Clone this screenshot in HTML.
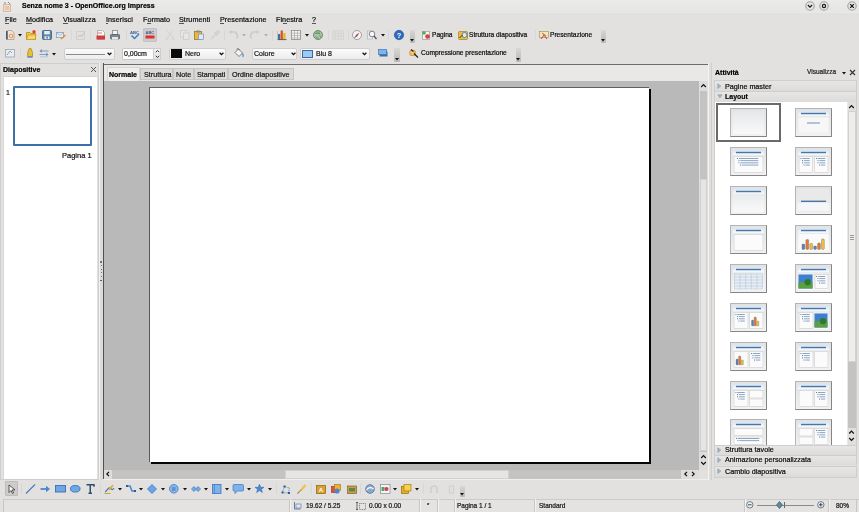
<!DOCTYPE html>
<html><head><meta charset="utf-8"><style>
*{margin:0;padding:0;box-sizing:border-box}
html,body{width:859px;height:512px;overflow:hidden}
body{background:#e2e1e0;font-family:"Liberation Sans",sans-serif;position:relative}
.a{position:absolute}
.t{position:absolute;white-space:nowrap;line-height:10px;will-change:transform;-webkit-text-stroke:0.2px currentColor}
svg.a{overflow:visible}
</style></head><body>
<div class="a" style="left:0px;top:0px;width:859px;height:13px;background:linear-gradient(#ebebeb,#e5e5e4)"></div>
<div class="a" style="left:0px;top:11.5px;width:859px;height:1px;background:#e9e9e8"></div>
<svg class="a" style="left:2px;top:1px" width="10" height="11" viewBox="0 0 10 11"><rect x="1.5" y="3.5" width="7" height="7" fill="#f3dcc6" stroke="#d9b9a0"/><path d="M2 2h2M6 1l2 2" stroke="#888" stroke-width="1"/><path d="M3 6h4M3 8h4" stroke="#c99" stroke-width="0.7"/></svg>
<div class="t" style="left:22px;top:0.57px;font-size:7px;font-weight:bold;color:#000;">Senza nome 3 - OpenOffice.org Impress</div>
<svg class="a" style="left:805.3px;top:1.2px" width="10" height="10" viewBox="0 0 10 10"><circle cx="5" cy="5" r="4.2" fill="#e6e6e6" stroke="#a0a0a0" stroke-width="1.1"/><path d="M2.9 4l2.1 2.1l2.1-2.1" fill="none" stroke="#1a1a1a" stroke-width="1.2"/></svg>
<svg class="a" style="left:819px;top:1.2px" width="10" height="10" viewBox="0 0 10 10"><circle cx="5" cy="5" r="4.2" fill="#e6e6e6" stroke="#a0a0a0" stroke-width="1.1"/><circle cx="5" cy="5" r="1.6" fill="none" stroke="#1a1a1a" stroke-width="1.2"/></svg>
<svg class="a" style="left:847.2px;top:1.2px" width="10" height="10" viewBox="0 0 10 10"><circle cx="5" cy="5" r="4.2" fill="#e6e6e6" stroke="#a0a0a0" stroke-width="1.1"/><path d="M3.2 3.2l3.6 3.6M6.8 3.2l-3.6 3.6" stroke="#111" stroke-width="1.2"/></svg>
<div class="t" style="left:5px;top:14.51px;font-size:7.2px;font-weight:normal;color:#0a0a0a;letter-spacing:0.05px">File</div>
<div class="t" style="left:26px;top:14.51px;font-size:7.2px;font-weight:normal;color:#0a0a0a;letter-spacing:0.05px">Modifica</div>
<div class="t" style="left:63px;top:14.51px;font-size:7.2px;font-weight:normal;color:#0a0a0a;letter-spacing:0.05px">Visualizza</div>
<div class="t" style="left:106px;top:14.51px;font-size:7.2px;font-weight:normal;color:#0a0a0a;letter-spacing:0.05px">Inserisci</div>
<div class="t" style="left:142.5px;top:14.51px;font-size:7.2px;font-weight:normal;color:#0a0a0a;letter-spacing:0.05px">Formato</div>
<div class="t" style="left:179px;top:14.51px;font-size:7.2px;font-weight:normal;color:#0a0a0a;letter-spacing:0.05px">Strumenti</div>
<div class="t" style="left:219.5px;top:14.51px;font-size:7.2px;font-weight:normal;color:#0a0a0a;letter-spacing:0.05px">Presentazione</div>
<div class="t" style="left:276px;top:14.51px;font-size:7.2px;font-weight:normal;color:#0a0a0a;letter-spacing:0.05px">Finestra</div>
<div class="t" style="left:312px;top:14.51px;font-size:7.2px;font-weight:normal;color:#0a0a0a;letter-spacing:0.05px">?</div>
<div class="a" style="left:5px;top:23px;width:4px;height:1px;background:#555"></div>
<div class="a" style="left:26px;top:23px;width:6px;height:1px;background:#555"></div>
<div class="a" style="left:63px;top:23px;width:5px;height:1px;background:#555"></div>
<div class="a" style="left:106px;top:23px;width:2px;height:1px;background:#555"></div>
<div class="a" style="left:147px;top:23px;width:4px;height:1px;background:#555"></div>
<div class="a" style="left:179px;top:23px;width:5px;height:1px;background:#555"></div>
<div class="a" style="left:219.5px;top:23px;width:4px;height:1px;background:#555"></div>
<div class="a" style="left:283px;top:23px;width:4px;height:1px;background:#555"></div>
<div class="a" style="left:312px;top:23px;width:4px;height:1px;background:#555"></div>
<svg class="a" style="left:4.5px;top:29.8px" width="10" height="10" viewBox="0 0 10 10"><path d="M2.5 0.5h4l2.5 2.5v6.5h-6.5z" fill="#f6e3cf" stroke="#b59a80" stroke-width="0.8"/><rect x="1" y="1" width="1.6" height="8.5" fill="#3d5f80"/><circle cx="6" cy="6" r="1.8" fill="none" stroke="#d88a4a" stroke-width="0.9"/></svg>
<svg class="a" style="left:17.8px;top:34px" width="4" height="3" viewBox="0 0 4 3"><path d="M0 0h4l-2 2.5z" fill="#111"/></svg>
<svg class="a" style="left:26px;top:29.8px" width="10" height="10" viewBox="0 0 10 10"><path d="M0.5 2.5h3.5l1 1h4.5v6h-9z" fill="#f2c44a" stroke="#b88a1a" stroke-width="0.8"/><path d="M0.5 9.5l1.5-4.5h8l-1 4.5z" fill="#f7d86a" stroke="#c09020" stroke-width="0.6"/><circle cx="8" cy="1.8" r="1.7" fill="#e0452a"/></svg>
<svg class="a" style="left:41.5px;top:29.8px" width="10" height="10" viewBox="0 0 10 10"><rect x="0.5" y="0.5" width="9" height="9" rx="1" fill="#5a84a3" stroke="#3c5d78" stroke-width="0.8"/><rect x="2.2" y="1" width="5.6" height="3.4" fill="#e4ecf2"/><rect x="2.5" y="6.2" width="5" height="3" fill="#e0e6ea"/><rect x="4.5" y="6.6" width="1.2" height="2" fill="#3c5d78"/></svg>
<svg class="a" style="left:56px;top:29.8px" width="10" height="10" viewBox="0 0 10 10"><rect x="0.5" y="2.5" width="7" height="5" fill="#e6eef6" stroke="#8aa0b8" stroke-width="0.8"/><path d="M0.5 2.5l3.5 3l3.5-3" fill="none" stroke="#8aa0b8" stroke-width="0.7"/><path d="M5 9l4.5-4" stroke="#e09040" stroke-width="1.6"/></svg>
<div class="a" style="left:71px;top:30px;width:1px;height:11px;background:#d8d7d6"></div>
<svg class="a" style="left:75.5px;top:29.8px" width="10" height="10" viewBox="0 0 10 10"><rect x="0.5" y="1.5" width="8" height="8" fill="none" stroke="#cfcfcf" stroke-width="0.9"/><path d="M2 7l2-2 1.5 1.5 3.5-5" fill="none" stroke="#c8c8c8" stroke-width="1.2"/></svg>
<div class="a" style="left:90px;top:30px;width:1px;height:11px;background:#d8d7d6"></div>
<svg class="a" style="left:96px;top:29.8px" width="10" height="10" viewBox="0 0 10 10"><path d="M1.5 0.5h5l2 2v7h-7z" fill="#fafafa" stroke="#b0a0a0" stroke-width="0.8"/><rect x="0.5" y="5.5" width="8.5" height="4" fill="#d23b3b"/><path d="M2 3h4" stroke="#d55" stroke-width="0.8"/></svg>
<svg class="a" style="left:110px;top:29.8px" width="10" height="10" viewBox="0 0 10 10"><rect x="2.5" y="0.5" width="5" height="4" fill="#f4f4f4" stroke="#8a8a8a" stroke-width="0.8"/><rect x="0.5" y="4.5" width="9" height="4.5" rx="0.8" fill="#7d8790" stroke="#55606a" stroke-width="0.8"/><rect x="2" y="7" width="6" height="2.5" fill="#e8e8e8"/></svg>
<div class="a" style="left:125.5px;top:30px;width:1px;height:11px;background:#d8d7d6"></div>
<svg class="a" style="left:130px;top:29.8px" width="10" height="10" viewBox="0 0 10 10"><text x="0" y="4.2" font-size="4.2" font-family="Liberation Sans" font-weight="bold" fill="#3a5f90">ABC</text><path d="M1.5 5.5l3 3l4.5-4.5" fill="none" stroke="#3b7fc7" stroke-width="1.5"/></svg>
<div class="a" style="left:143px;top:28px;width:13.5px;height:14px;background:#cdcccb;border:1px solid #c3c2c1;border-radius:1px"></div>
<svg class="a" style="left:144.5px;top:29.8px" width="10" height="10" viewBox="0 0 10 10"><text x="0.5" y="4.2" font-size="4" font-family="Liberation Sans" font-weight="bold" fill="#3a5f90">ABC</text><rect x="0.5" y="5.5" width="9" height="3" fill="#e03030"/></svg>
<svg class="a" style="left:165px;top:29.8px" width="10" height="10" viewBox="0 0 10 10"><path d="M2 1l6 7M8 1l-6 7" stroke="#d4d4d4" stroke-width="1.1"/><circle cx="2" cy="8.5" r="1.3" fill="none" stroke="#d4d4d4"/><circle cx="8" cy="8.5" r="1.3" fill="none" stroke="#d4d4d4"/></svg>
<svg class="a" style="left:180px;top:29.8px" width="10" height="10" viewBox="0 0 10 10"><rect x="0.5" y="0.5" width="5.5" height="6.5" fill="#e8e8e8" stroke="#d0d0d0"/><rect x="3.5" y="3" width="5.5" height="6.5" fill="#e6e6e6" stroke="#cfcfcf"/></svg>
<svg class="a" style="left:193.5px;top:29.8px" width="10" height="10" viewBox="0 0 10 10"><rect x="0.5" y="1.5" width="7" height="8" fill="#e7b845" stroke="#a07b20" stroke-width="0.8"/><rect x="2.5" y="0.5" width="3" height="2" fill="#888"/><rect x="4.5" y="4" width="5" height="5.5" fill="#dfe8f5" stroke="#7a90b0" stroke-width="0.7"/></svg>
<svg class="a" style="left:209.5px;top:29.8px" width="10" height="10" viewBox="0 0 10 10"><path d="M1 9l5-5M5 3l3-2 1 1-2 3z" stroke="#d0d0d0" stroke-width="1.4" fill="#ddd"/></svg>
<div class="a" style="left:223.5px;top:30px;width:1px;height:11px;background:#d8d7d6"></div>
<svg class="a" style="left:227.5px;top:29.8px" width="10" height="10" viewBox="0 0 10 10"><path d="M8.5 8.5a4 4 0 0 0-4-6.5h-3" fill="none" stroke="#cbcbcb" stroke-width="1.6"/><path d="M0.5 2l3-2v4z" fill="#cbcbcb"/></svg>
<svg class="a" style="left:242px;top:34px" width="4" height="3" viewBox="0 0 4 3"><path d="M0 0h4l-2 2.5z" fill="#b0b0b0"/></svg>
<svg class="a" style="left:250px;top:29.8px" width="10" height="10" viewBox="0 0 10 10"><path d="M1.5 8.5a4 4 0 0 1 4-6.5h3" fill="none" stroke="#cbcbcb" stroke-width="1.6"/><path d="M9.5 2l-3-2v4z" fill="#cbcbcb"/></svg>
<svg class="a" style="left:264px;top:34px" width="4" height="3" viewBox="0 0 4 3"><path d="M0 0h4l-2 2.5z" fill="#b0b0b0"/></svg>
<div class="a" style="left:271.5px;top:30px;width:1px;height:11px;background:#d8d7d6"></div>
<svg class="a" style="left:276.5px;top:29.8px" width="10" height="10" viewBox="0 0 10 10"><rect x="1" y="4" width="2.3" height="5.5" fill="#3f6fb0"/><rect x="3.6" y="0.5" width="2.3" height="9" fill="#d45a1e"/><rect x="6.2" y="3" width="2.3" height="6.5" fill="#f0b428"/><path d="M0.5 9.6h9" stroke="#444" stroke-width="0.8"/><path d="M0.5 1v9" stroke="#9aa" stroke-width="0.5"/></svg>
<svg class="a" style="left:291px;top:29.8px" width="10" height="10" viewBox="0 0 10 10"><rect x="0.5" y="0.5" width="9" height="9" fill="#f6f6f6" stroke="#8c8c8c" stroke-width="0.8"/><path d="M0.5 3.2h9M0.5 5.6h9M0.5 8h9M3.5 0.5v9M6.5 0.5v9" stroke="#9a9a9a" stroke-width="0.6"/></svg>
<svg class="a" style="left:304.5px;top:34px" width="4" height="3" viewBox="0 0 4 3"><path d="M0 0h4l-2 2.5z" fill="#111"/></svg>
<svg class="a" style="left:312.5px;top:29.8px" width="10" height="10" viewBox="0 0 10 10"><circle cx="5" cy="5" r="4.5" fill="#a6c89a" stroke="#66806a" stroke-width="0.9"/><path d="M2 3.5c1.5-1 2.5 0.5 4-0.5l1 1.5M2.5 6.5c1 1.5 2.5 1 3 2.5M6.5 6l1.5 1" stroke="#6a7f8a" stroke-width="1" fill="none"/><path d="M3 2h4" stroke="#5fae4a" stroke-width="1"/></svg>
<div class="a" style="left:327.5px;top:30px;width:1px;height:11px;background:#d8d7d6"></div>
<svg class="a" style="left:332px;top:29.8px" width="12" height="10" viewBox="0 0 12 10"><path d="M0.5 1h11M0.5 3.7h11M0.5 6.4h11M0.5 9.1h11M1 0.5v9.5M3.7 0.5v9.5M6.4 0.5v9.5M9.1 0.5v9.5M11.5 0.5v9.5" stroke="#c2c2c2" stroke-width="0.6" stroke-dasharray="0.9 0.6"/></svg>
<div class="a" style="left:348px;top:30px;width:1px;height:11px;background:#d8d7d6"></div>
<svg class="a" style="left:352px;top:29.8px" width="10" height="10" viewBox="0 0 10 10"><circle cx="5" cy="5" r="4.5" fill="#f4f4f4" stroke="#9a9a9a" stroke-width="0.9"/><path d="M7.5 2.5L5.5 5.5L2.5 7.5L4.5 4.5z" fill="#d33"/><path d="M2.5 7.5l3-2" stroke="#3a5f90" stroke-width="1"/></svg>
<svg class="a" style="left:366.5px;top:29.8px" width="10" height="10" viewBox="0 0 10 10"><rect x="0.5" y="1" width="5" height="8" fill="#e8eef6" stroke="#a0b0c4" stroke-width="0.6"/><circle cx="5" cy="4" r="2.8" fill="#f8f8f8" stroke="#777" stroke-width="0.9"/><path d="M7 6l2.5 3" stroke="#555" stroke-width="1.3"/></svg>
<svg class="a" style="left:380.5px;top:34px" width="4" height="3" viewBox="0 0 4 3"><path d="M0 0h4l-2 2.5z" fill="#111"/></svg>
<div class="a" style="left:388px;top:30px;width:1px;height:11px;background:#d8d7d6"></div>
<svg class="a" style="left:393.5px;top:29.8px" width="10" height="10" viewBox="0 0 10 10"><circle cx="5" cy="5" r="4.7" fill="#2f6ac0" stroke="#1d4f9a" stroke-width="0.6"/><text x="5" y="7.9" font-size="7.5" text-anchor="middle" font-family="Liberation Sans" font-weight="bold" fill="#fff">?</text></svg>
<div class="a" style="left:409.5px;top:30px;width:5.5px;height:13px;background:linear-gradient(#d8d7d6,#b9b8b7);border-radius:1px"></div>
<svg class="a" style="left:410.0px;top:39px" width="4" height="3" viewBox="0 0 4 3"><path d="M0 0h4l-2 2.5z" fill="#111"/></svg>
<svg class="a" style="left:420.5px;top:29.8px" width="10" height="10" viewBox="0 0 10 10"><rect x="1.5" y="1.5" width="7" height="8" fill="#f4f4f4" stroke="#999" stroke-width="0.7"/><circle cx="3" cy="3" r="1.8" fill="#4caf50"/><circle cx="6.5" cy="6.5" r="2.3" fill="#d64040"/></svg>
<div class="t" style="left:432px;top:29.91px;font-size:6.6px;font-weight:normal;color:#0a0a0a;">Pagina</div>
<svg class="a" style="left:457.5px;top:29.8px" width="10" height="10" viewBox="0 0 10 10"><rect x="0.5" y="1.5" width="9" height="8" rx="1" fill="#e8c040" stroke="#a08020" stroke-width="0.7"/><circle cx="6.5" cy="5" r="2.5" fill="#dfe8f5" stroke="#4a6fa0" stroke-width="0.8"/><path d="M1.5 8l3-3" stroke="#333" stroke-width="1"/></svg>
<div class="t" style="left:469px;top:29.91px;font-size:6.6px;font-weight:normal;color:#0a0a0a;">Struttura diapositiva</div>
<div class="a" style="left:534.5px;top:30px;width:1px;height:11px;background:#d8d7d6"></div>
<svg class="a" style="left:538.5px;top:29.8px" width="10" height="10" viewBox="0 0 10 10"><rect x="0.5" y="1.5" width="9" height="6" fill="#f3e6c8" stroke="#b09060" stroke-width="0.7"/><path d="M2 9l3-4l3 4" stroke="#c04040" stroke-width="1" fill="none"/><path d="M3 3l4 3" stroke="#d08030" stroke-width="1.2"/></svg>
<div class="t" style="left:550px;top:29.91px;font-size:6.6px;font-weight:normal;color:#0a0a0a;">Presentazione</div>
<div class="a" style="left:600.5px;top:30px;width:5.5px;height:13px;background:linear-gradient(#d8d7d6,#b9b8b7);border-radius:1px"></div>
<svg class="a" style="left:601.0px;top:39px" width="4" height="3" viewBox="0 0 4 3"><path d="M0 0h4l-2 2.5z" fill="#111"/></svg>
<svg class="a" style="left:4.5px;top:48px" width="10" height="10" viewBox="0 0 10 10"><rect x="0.5" y="1.5" width="9" height="7.5" fill="#e9edf2" stroke="#9aa4b0" stroke-width="0.8"/><path d="M2 7l3-4l2 2" fill="none" stroke="#8a96a4" stroke-width="0.9"/></svg>
<div class="a" style="left:19.8px;top:48px;width:1px;height:11px;background:#d8d7d6"></div>
<svg class="a" style="left:26px;top:48px" width="8" height="10" viewBox="0 0 8 10"><path d="M3.2 0.5l1.8 0l1.5 4v4h-4.8v-4z" fill="#e8c030" stroke="#a48214" stroke-width="0.7"/><rect x="1.5" y="8" width="5" height="1.8" fill="#6d8fc0"/></svg>
<svg class="a" style="left:39px;top:48px" width="10" height="10" viewBox="0 0 10 10"><path d="M2 3h7.5M0.5 6.5h7.5" stroke="#7d9bc4" stroke-width="1.1"/><path d="M0.5 3l2.2-2v4zM9.5 6.5l-2.2-2v4z" fill="#6f90bd"/><path d="M1 8.8h8" stroke="#a9bdd8" stroke-width="0.8"/></svg>
<svg class="a" style="left:52.4px;top:52.5px" width="4" height="3" viewBox="0 0 4 3"><path d="M0 0h4l-2 2.5z" fill="#111"/></svg>
<div class="a" style="left:63.5px;top:47.5px;width:51px;height:12px;background:linear-gradient(#fbfbfb,#ececec);border:1px solid #cfcece;border-radius:2px"></div>
<div class="a" style="left:65.5px;top:53.5px;width:39px;height:1.2px;background:#8a8a8a"></div>
<svg class="a" style="left:107.2px;top:52px" width="5" height="4" viewBox="0 0 5 4"><path d="M0.6 0.8l1.9 1.9l1.9-1.9" fill="none" stroke="#111" stroke-width="1.3"/></svg>
<div class="a" style="left:121.5px;top:47.5px;width:32px;height:12px;background:#fcfcfc;border:1px solid #c9c8c7;border-radius:1px"></div>
<div class="t" style="left:123.5px;top:49.07px;font-size:7px;font-weight:normal;color:#111;">0,00cm</div>
<div class="a" style="left:153px;top:47.5px;width:8px;height:12px;background:linear-gradient(#f2f2f2,#e0e0e0);border:1px solid #cfcece"></div>
<svg class="a" style="left:154.5px;top:48.5px" width="5" height="10" viewBox="0 0 5 10"><path d="M0.8 3.2l1.7-1.7l1.7 1.7M0.8 6.8l1.7 1.7l1.7-1.7" fill="none" stroke="#222" stroke-width="0.9"/></svg>
<div class="a" style="left:168.5px;top:47.5px;width:57px;height:12px;background:linear-gradient(#fbfbfb,#ececec);border:1px solid #cfcece;border-radius:2px"></div>
<div class="a" style="left:171px;top:49.3px;width:10.5px;height:8.3px;background:#0a0a0a"></div>
<div class="t" style="left:184.5px;top:49.07px;font-size:7px;font-weight:normal;color:#111;">Nero</div>
<svg class="a" style="left:218.5px;top:52px" width="5" height="4" viewBox="0 0 5 4"><path d="M0.6 0.8l1.9 1.9l1.9-1.9" fill="none" stroke="#111" stroke-width="1.3"/></svg>
<svg class="a" style="left:234px;top:48px" width="10" height="10" viewBox="0 0 10 10"><path d="M1 4.5l3.5-3.5 4 4-3.5 3.5z" fill="#f4f4f4" stroke="#6a6f78" stroke-width="0.9"/><path d="M2.5 1.2c1-1 2.5-0.5 3 0.6" stroke="#555" stroke-width="0.7" fill="none"/><path d="M8.5 5.5c0.8 1 1 2.5 0.3 3.5" stroke="#4f8fd0" stroke-width="1.3" fill="none"/></svg>
<div class="a" style="left:251.5px;top:47.5px;width:45.5px;height:12px;background:linear-gradient(#fbfbfb,#ececec);border:1px solid #cfcece;border-radius:2px"></div>
<div class="t" style="left:254px;top:49.07px;font-size:7px;font-weight:normal;color:#111;">Colore</div>
<svg class="a" style="left:290.5px;top:52px" width="5" height="4" viewBox="0 0 5 4"><path d="M0.6 0.8l1.9 1.9l1.9-1.9" fill="none" stroke="#111" stroke-width="1.3"/></svg>
<div class="a" style="left:300px;top:47.5px;width:69.5px;height:12px;background:linear-gradient(#fbfbfb,#ececec);border:1px solid #cfcece;border-radius:2px"></div>
<div class="a" style="left:302px;top:49.5px;width:11px;height:8px;background:#9ccaf6;border:1px solid #3e6a9c"></div>
<div class="t" style="left:316px;top:49.07px;font-size:7px;font-weight:normal;color:#111;">Blu 8</div>
<svg class="a" style="left:362.2px;top:52px" width="5" height="4" viewBox="0 0 5 4"><path d="M0.6 0.8l1.9 1.9l1.9-1.9" fill="none" stroke="#111" stroke-width="1.3"/></svg>
<svg class="a" style="left:377.5px;top:48px" width="10" height="10" viewBox="0 0 10 10"><rect x="1.5" y="3.5" width="8" height="5" fill="#3a6ea8"/><rect x="0.5" y="1.5" width="8" height="5" fill="#7cb6ef" stroke="#3d76b6" stroke-width="0.7"/></svg>
<div class="a" style="left:394px;top:47.5px;width:5.5px;height:14px;background:linear-gradient(#d8d7d6,#b9b8b7);border-radius:1px"></div>
<svg class="a" style="left:394.5px;top:57.5px" width="4" height="3" viewBox="0 0 4 3"><path d="M0 0h4l-2 2.5z" fill="#111"/></svg>
<svg class="a" style="left:409px;top:48px" width="10" height="10" viewBox="0 0 10 10"><rect x="0.8" y="2.5" width="5.5" height="5" rx="1.2" fill="#f3c56a" stroke="#d08a30" stroke-width="0.8"/><path d="M2 1.5l2.5 2M5 5.5l4 4" stroke="#222" stroke-width="1.2"/></svg>
<div class="t" style="left:420.5px;top:48.21px;font-size:6.6px;font-weight:normal;color:#0a0a0a;">Compressione presentazione</div>
<div class="a" style="left:515.5px;top:47.5px;width:5.5px;height:14px;background:linear-gradient(#d8d7d6,#b9b8b7);border-radius:1px"></div>
<svg class="a" style="left:516.0px;top:57.5px" width="4" height="3" viewBox="0 0 4 3"><path d="M0 0h4l-2 2.5z" fill="#111"/></svg>
<div class="a" style="left:0px;top:63px;width:99px;height:417px;background:#e2e1e0;border:1px solid #cfcecd"></div>
<div class="a" style="left:2.5px;top:76px;width:94px;height:403px;background:#fff;border-top:1px solid #d4d3d2;border-left:1px solid #d8d7d6"></div>
<div class="t" style="left:3px;top:65.07px;font-size:7px;font-weight:bold;color:#000;">Diapositive</div>
<svg class="a" style="left:89.5px;top:65.6px" width="7" height="7" viewBox="0 0 7 7"><path d="M1 1l5 5M6 1l-5 5" stroke="#555" stroke-width="1"/></svg>
<div class="t" style="left:5.5px;top:88.07px;font-size:7px;font-weight:normal;color:#1a1a1a;">1</div>
<div class="a" style="left:13px;top:86px;width:78.5px;height:59.5px;border:2px solid #3d6fa8;background:#fff;border-radius:1px"></div>
<div class="t" style="left:61.5px;top:150.90px;font-size:7.5px;font-weight:normal;color:#111;">Pagina 1</div>
<div class="a" style="left:98.5px;top:63px;width:4.5px;height:417px;background:#dddcdb;border-left:1px solid #f2f2f2"></div>
<div class="a" style="left:100.2px;top:261px;width:1.6px;height:1.6px;background:#505050;border-radius:1px"></div>
<div class="a" style="left:100.2px;top:279.5px;width:1.6px;height:1.6px;background:#505050;border-radius:1px"></div>
<div class="a" style="left:100.5px;top:265px;width:1px;height:1px;background:#777"></div>
<div class="a" style="left:100.5px;top:268.5px;width:1px;height:1px;background:#777"></div>
<div class="a" style="left:100.5px;top:272px;width:1px;height:1px;background:#777"></div>
<div class="a" style="left:100.5px;top:275.5px;width:1px;height:1px;background:#777"></div>
<div class="a" style="left:103px;top:63.6px;width:605px;height:1.5px;background:#6c6c6c"></div>
<div class="a" style="left:103px;top:63px;width:1px;height:417px;background:#505050"></div>
<div class="a" style="left:104px;top:64.5px;width:604px;height:16.5px;background:#e9e8e7"></div>
<div class="a" style="left:107px;top:66.5px;width:33px;height:14.5px;background:#efeeed;border:1px solid #d6d5d4;border-bottom:none"></div>
<div class="t" style="left:108.7px;top:69.57px;font-size:7px;font-weight:bold;color:#000;">Normale</div>
<div class="a" style="left:140px;top:67.5px;width:33px;height:12.5px;background:#dad9d8;border:1px solid #c6c5c4"></div>
<div class="t" style="left:143.5px;top:69.71px;font-size:7.2px;font-weight:normal;color:#111;">Struttura</div>
<div class="a" style="left:173px;top:67.5px;width:21px;height:12.5px;background:#dad9d8;border:1px solid #c6c5c4"></div>
<div class="t" style="left:176px;top:69.71px;font-size:7.2px;font-weight:normal;color:#111;">Note</div>
<div class="a" style="left:194px;top:67.5px;width:34px;height:12.5px;background:#dad9d8;border:1px solid #c6c5c4"></div>
<div class="t" style="left:197px;top:69.71px;font-size:7.2px;font-weight:normal;color:#111;">Stampati</div>
<div class="a" style="left:228px;top:67.5px;width:66px;height:12.5px;background:#dad9d8;border:1px solid #c6c5c4"></div>
<div class="t" style="left:231.5px;top:69.71px;font-size:7.2px;font-weight:normal;color:#111;">Ordine diapositive</div>
<div class="a" style="left:104px;top:81px;width:595px;height:388.5px;background:#b9b9b9"></div>
<div class="a" style="left:151px;top:89px;width:500px;height:374.5px;background:#050505"></div>
<div class="a" style="left:149px;top:87px;width:500.3px;height:374.5px;background:#fff;border-left:1px solid #585858;border-top:1px solid #606060"></div>
<div class="a" style="left:699px;top:81px;width:8.5px;height:388.5px;background:#dedddc"></div>
<div class="a" style="left:699.5px;top:91px;width:7.5px;height:88px;background:#c4c3c2"></div>
<div class="a" style="left:699.5px;top:179px;width:7.5px;height:272px;background:#e6e5e4;border:1px solid #d2d1d0"></div>
<div class="a" style="left:699.5px;top:451px;width:7.5px;height:1px;background:#c4c3c2"></div>
<svg class="a" style="left:700px;top:83px" width="7" height="6" viewBox="0 0 7 6"><path d="M1.2 4l2.3-2.3l2.3 2.3" fill="none" stroke="#111" stroke-width="1.2"/></svg>
<svg class="a" style="left:700px;top:454px" width="7" height="12" viewBox="0 0 7 12"><path d="M1.2 4l2.3-2.3l2.3 2.3M1.2 8l2.3 2.3l2.3-2.3" fill="none" stroke="#111" stroke-width="1.2"/></svg>
<div class="a" style="left:104px;top:469.5px;width:595px;height:9.5px;background:#dedddc"></div>
<div class="a" style="left:112px;top:470px;width:172.5px;height:8.5px;background:#c4c3c2"></div>
<div class="a" style="left:284.5px;top:470px;width:224.5px;height:8.5px;background:#e6e5e4;border:1px solid #d2d1d0"></div>
<div class="a" style="left:509px;top:470px;width:172px;height:8.5px;background:#c4c3c2"></div>
<svg class="a" style="left:105px;top:470px" width="6" height="8" viewBox="0 0 6 8"><path d="M4 1.8l-2.2 2.2l2.2 2.2" fill="none" stroke="#111" stroke-width="1.2"/></svg>
<svg class="a" style="left:682px;top:470px" width="16" height="8" viewBox="0 0 16 8"><path d="M5 1.8l-2.2 2.2l2.2 2.2M10 1.8l2.2 2.2l-2.2 2.2" fill="none" stroke="#111" stroke-width="1.2"/></svg>
<div class="a" style="left:699px;top:469.5px;width:9px;height:10px;background:#e2e1e0"></div>
<div class="a" style="left:103px;top:479px;width:605px;height:1px;background:#f0efee"></div>
<div class="a" style="left:708px;top:63px;width:4px;height:417px;background:#dfdedd;border-left:1px solid #f3f3f3;border-right:1px solid #cfcecd"></div>
<div class="a" style="left:712px;top:63px;width:147px;height:417px;background:#e2e1e0"></div>
<div class="t" style="left:715px;top:67.87px;font-size:7px;font-weight:bold;color:#000;">Attività</div>
<div class="t" style="left:807.2px;top:67.25px;font-size:6.5px;font-weight:normal;color:#1a1a1a;">Visualizza</div>
<svg class="a" style="left:842px;top:71.5px" width="4" height="3" viewBox="0 0 4 3"><path d="M0 0h4l-2 2.5z" fill="#111"/></svg>
<svg class="a" style="left:849px;top:68.5px" width="7" height="7" viewBox="0 0 7 7"><path d="M1 1l5 5M6 1l-5 5" stroke="#333" stroke-width="1.1"/></svg>
<div class="a" style="left:714px;top:80px;width:142.5px;height:10.5px;background:linear-gradient(#e7e6e5,#dcdbda);border:1px solid #cfcecd;border-bottom:none"></div>
<svg class="a" style="left:717px;top:82.5px" width="5" height="7" viewBox="0 0 5 7"><path d="M0.8 0.8v4.6l3-2.3z" fill="#a9b9c9" stroke="#8096aa" stroke-width="0.6" stroke-linejoin="round"/></svg>
<div class="t" style="left:724.5px;top:81.51px;font-size:7.2px;font-weight:normal;color:#0a0a0a;">Pagine master</div>
<div class="a" style="left:714px;top:90.5px;width:142.5px;height:11.0px;background:linear-gradient(#e7e6e5,#dcdbda);border:1px solid #cfcecd;border-bottom:none"></div>
<svg class="a" style="left:716.5px;top:94.0px" width="6" height="5" viewBox="0 0 6 5"><path d="M0.8 0.8h4.2l-2.1 3z" fill="#a9b9c9" stroke="#8096aa" stroke-width="0.6" stroke-linejoin="round"/></svg>
<div class="t" style="left:724.5px;top:92.07px;font-size:7px;font-weight:bold;color:#0a0a0a;">Layout</div>
<div class="a" style="left:714px;top:101.5px;width:142.5px;height:343.5px;background:#fff;border-left:1px solid #cfcecd;border-right:1px solid #cfcecd"></div>
<div class="a" style="left:847px;top:101.5px;width:9px;height:343.5px;background:#e0dfde;border-left:1px solid #e8e8e8"></div>
<svg class="a" style="left:848px;top:103.8px" width="7" height="6" viewBox="0 0 7 6"><path d="M1.2 4l2.3-2.3l2.3 2.3" fill="none" stroke="#111" stroke-width="1.2"/></svg>
<div class="a" style="left:847.5px;top:111px;width:8px;height:251px;background:#eeeded;border:1px solid #d2d1d0"></div>
<div class="a" style="left:849.5px;top:235px;width:4px;height:0.8px;background:#999"></div>
<div class="a" style="left:849.5px;top:237px;width:4px;height:0.8px;background:#999"></div>
<div class="a" style="left:849.5px;top:239px;width:4px;height:0.8px;background:#999"></div>
<div class="a" style="left:847.5px;top:362px;width:8px;height:66px;background:#c4c3c2"></div>
<svg class="a" style="left:848px;top:429px" width="7" height="14" viewBox="0 0 7 14"><path d="M1.2 4.5l2.3-2.3l2.3 2.3M1.2 9l2.3 2.3l2.3-2.3" fill="none" stroke="#111" stroke-width="1.2"/></svg>
<div class="a" style="left:714px;top:444.5px;width:142.5px;height:10.199999999999989px;background:linear-gradient(#e7e6e5,#dcdbda);border:1px solid #cfcecd;border-bottom:none"></div>
<svg class="a" style="left:717px;top:447.0px" width="5" height="7" viewBox="0 0 5 7"><path d="M0.8 0.8v4.6l3-2.3z" fill="#a9b9c9" stroke="#8096aa" stroke-width="0.6" stroke-linejoin="round"/></svg>
<div class="t" style="left:724.5px;top:445.21px;font-size:7.2px;font-weight:normal;color:#0a0a0a;">Struttura tavole</div>
<div class="a" style="left:714px;top:454.7px;width:142.5px;height:10.800000000000011px;background:linear-gradient(#e7e6e5,#dcdbda);border:1px solid #cfcecd;border-bottom:none"></div>
<svg class="a" style="left:717px;top:457.2px" width="5" height="7" viewBox="0 0 5 7"><path d="M0.8 0.8v4.6l3-2.3z" fill="#a9b9c9" stroke="#8096aa" stroke-width="0.6" stroke-linejoin="round"/></svg>
<div class="t" style="left:724.5px;top:455.41px;font-size:7.2px;font-weight:normal;color:#0a0a0a;">Animazione personalizzata</div>
<div class="a" style="left:714px;top:465.5px;width:142.5px;height:11.5px;background:linear-gradient(#e7e6e5,#dcdbda);border:1px solid #cfcecd;border-bottom:none"></div>
<svg class="a" style="left:717px;top:468.0px" width="5" height="7" viewBox="0 0 5 7"><path d="M0.8 0.8v4.6l3-2.3z" fill="#a9b9c9" stroke="#8096aa" stroke-width="0.6" stroke-linejoin="round"/></svg>
<div class="t" style="left:724.5px;top:466.61px;font-size:7.2px;font-weight:normal;color:#0a0a0a;">Cambio diapositiva</div>
<div class="a" style="left:714px;top:477px;width:142.5px;height:1px;background:#cfcecd"></div>
<div class="a" style="left:714px;top:101.5px;width:133px;height:343px;overflow:hidden">
<div class="a" style="left:2px;top:1.7000000000000028px;width:64.7px;height:38.6px;border:2px solid #6a6a6a"></div>
<svg class="a" style="left:16.299999999999955px;top:6.700000000000003px" width="37" height="29" viewBox="0 0 37 29"><defs><linearGradient id="g" x1="0" y1="0" x2="0" y2="1"><stop offset="0" stop-color="#e3e5e7"/><stop offset="1" stop-color="#fbfbfb"/></linearGradient><linearGradient id="tb" x1="0" y1="0" x2="0" y2="1"><stop offset="0" stop-color="#d5e5f5"/><stop offset="1" stop-color="#f6f9fc"/></linearGradient></defs><rect x="0.5" y="0.5" width="36" height="28" fill="url(#g)" stroke="#b4b4b4" stroke-width="1"/><path d="M36.5 0.5v28h-36" fill="none" stroke="#858585" stroke-width="1"/><rect x="2" y="2" width="33" height="25" fill="none" stroke="#dcdcdc" stroke-width="0.6"/></svg>
<svg class="a" style="left:81px;top:6.700000000000003px" width="37" height="29" viewBox="0 0 37 29"><defs><linearGradient id="g" x1="0" y1="0" x2="0" y2="1"><stop offset="0" stop-color="#e3e5e7"/><stop offset="1" stop-color="#fbfbfb"/></linearGradient><linearGradient id="tb" x1="0" y1="0" x2="0" y2="1"><stop offset="0" stop-color="#d5e5f5"/><stop offset="1" stop-color="#f6f9fc"/></linearGradient></defs><rect x="0.5" y="0.5" width="36" height="28" fill="url(#g)" stroke="#b4b4b4" stroke-width="1"/><path d="M36.5 0.5v28h-36" fill="none" stroke="#858585" stroke-width="1"/><rect x="2" y="2" width="33" height="25" fill="none" stroke="#dcdcdc" stroke-width="0.6"/><rect x="3" y="3" width="31" height="5" fill="url(#tb)"/><rect x="6" y="4.8" width="25" height="1.4" fill="#4a76a4"/><rect x="3" y="9" width="31" height="16" fill="#f7f7f7" stroke="#e0e0e0" stroke-width="0.5"/><rect x="12" y="14.5" width="13" height="1" fill="#6a8fb8"/></svg>
<svg class="a" style="left:16.299999999999955px;top:45.599999999999994px" width="37" height="29" viewBox="0 0 37 29"><defs><linearGradient id="g" x1="0" y1="0" x2="0" y2="1"><stop offset="0" stop-color="#e3e5e7"/><stop offset="1" stop-color="#fbfbfb"/></linearGradient><linearGradient id="tb" x1="0" y1="0" x2="0" y2="1"><stop offset="0" stop-color="#d5e5f5"/><stop offset="1" stop-color="#f6f9fc"/></linearGradient></defs><rect x="0.5" y="0.5" width="36" height="28" fill="url(#g)" stroke="#b4b4b4" stroke-width="1"/><path d="M36.5 0.5v28h-36" fill="none" stroke="#858585" stroke-width="1"/><rect x="2" y="2" width="33" height="25" fill="none" stroke="#dcdcdc" stroke-width="0.6"/><rect x="3" y="3" width="31" height="5" fill="url(#tb)"/><rect x="6" y="4.8" width="25" height="1.4" fill="#4a76a4"/><rect x="4.0" y="9.5" width="29" height="16" fill="#fbfbfb" stroke="#d6d6d6" stroke-width="0.8"/><rect x="7.0" y="11.0" width="0.9" height="0.9" fill="#3a5f8a"/><rect x="8.8" y="11.0" width="19.5" height="0.9" fill="#7e9cbf"/><rect x="8.5" y="13.2" width="0.9" height="0.9" fill="#3a5f8a"/><rect x="10.3" y="13.2" width="18.0" height="0.9" fill="#7e9cbf"/><rect x="8.5" y="15.4" width="0.9" height="0.9" fill="#3a5f8a"/><rect x="10.3" y="15.4" width="18.0" height="0.9" fill="#7e9cbf"/><rect x="10.0" y="17.6" width="0.9" height="0.9" fill="#3a5f8a"/><rect x="11.8" y="17.6" width="16.5" height="0.9" fill="#7e9cbf"/></svg>
<svg class="a" style="left:81px;top:45.599999999999994px" width="37" height="29" viewBox="0 0 37 29"><defs><linearGradient id="g" x1="0" y1="0" x2="0" y2="1"><stop offset="0" stop-color="#e3e5e7"/><stop offset="1" stop-color="#fbfbfb"/></linearGradient><linearGradient id="tb" x1="0" y1="0" x2="0" y2="1"><stop offset="0" stop-color="#d5e5f5"/><stop offset="1" stop-color="#f6f9fc"/></linearGradient></defs><rect x="0.5" y="0.5" width="36" height="28" fill="url(#g)" stroke="#b4b4b4" stroke-width="1"/><path d="M36.5 0.5v28h-36" fill="none" stroke="#858585" stroke-width="1"/><rect x="2" y="2" width="33" height="25" fill="none" stroke="#dcdcdc" stroke-width="0.6"/><rect x="3" y="3" width="31" height="5" fill="url(#tb)"/><rect x="6" y="4.8" width="25" height="1.4" fill="#4a76a4"/><rect x="4.0" y="9.5" width="13.5" height="16" fill="#fbfbfb" stroke="#d6d6d6" stroke-width="0.8"/><rect x="19.5" y="9.5" width="13.5" height="16" fill="#fbfbfb" stroke="#d6d6d6" stroke-width="0.8"/><rect x="5.5" y="11.0" width="0.9" height="0.9" fill="#3a5f8a"/><rect x="7.3" y="11.0" width="7.5" height="0.9" fill="#7e9cbf"/><rect x="7.0" y="13.2" width="0.9" height="0.9" fill="#3a5f8a"/><rect x="8.8" y="13.2" width="6.0" height="0.9" fill="#7e9cbf"/><rect x="7.0" y="15.4" width="0.9" height="0.9" fill="#3a5f8a"/><rect x="8.8" y="15.4" width="6.0" height="0.9" fill="#7e9cbf"/><rect x="8.5" y="17.6" width="0.9" height="0.9" fill="#3a5f8a"/><rect x="10.3" y="17.6" width="4.5" height="0.9" fill="#7e9cbf"/><rect x="21.0" y="11.0" width="0.9" height="0.9" fill="#3a5f8a"/><rect x="22.8" y="11.0" width="7.5" height="0.9" fill="#7e9cbf"/><rect x="22.5" y="13.2" width="0.9" height="0.9" fill="#3a5f8a"/><rect x="24.3" y="13.2" width="6.0" height="0.9" fill="#7e9cbf"/><rect x="22.5" y="15.4" width="0.9" height="0.9" fill="#3a5f8a"/><rect x="24.3" y="15.4" width="6.0" height="0.9" fill="#7e9cbf"/><rect x="24.0" y="17.6" width="0.9" height="0.9" fill="#3a5f8a"/><rect x="25.8" y="17.6" width="4.5" height="0.9" fill="#7e9cbf"/></svg>
<svg class="a" style="left:16.299999999999955px;top:84.5px" width="37" height="29" viewBox="0 0 37 29"><defs><linearGradient id="g" x1="0" y1="0" x2="0" y2="1"><stop offset="0" stop-color="#e3e5e7"/><stop offset="1" stop-color="#fbfbfb"/></linearGradient><linearGradient id="tb" x1="0" y1="0" x2="0" y2="1"><stop offset="0" stop-color="#d5e5f5"/><stop offset="1" stop-color="#f6f9fc"/></linearGradient></defs><rect x="0.5" y="0.5" width="36" height="28" fill="url(#g)" stroke="#b4b4b4" stroke-width="1"/><path d="M36.5 0.5v28h-36" fill="none" stroke="#858585" stroke-width="1"/><rect x="2" y="2" width="33" height="25" fill="none" stroke="#dcdcdc" stroke-width="0.6"/><rect x="3" y="3" width="31" height="5" fill="url(#tb)"/><rect x="6" y="4.8" width="25" height="1.4" fill="#4a76a4"/></svg>
<svg class="a" style="left:81px;top:84.5px" width="37" height="29" viewBox="0 0 37 29"><defs><linearGradient id="g" x1="0" y1="0" x2="0" y2="1"><stop offset="0" stop-color="#e3e5e7"/><stop offset="1" stop-color="#fbfbfb"/></linearGradient><linearGradient id="tb" x1="0" y1="0" x2="0" y2="1"><stop offset="0" stop-color="#d5e5f5"/><stop offset="1" stop-color="#f6f9fc"/></linearGradient></defs><rect x="0.5" y="0.5" width="36" height="28" fill="url(#g)" stroke="#b4b4b4" stroke-width="1"/><path d="M36.5 0.5v28h-36" fill="none" stroke="#858585" stroke-width="1"/><rect x="2" y="2" width="33" height="25" fill="none" stroke="#dcdcdc" stroke-width="0.6"/><rect x="3" y="3" width="31" height="23" fill="#e9e9e9"/><rect x="3" y="17" width="31" height="8" fill="#f4f6f9"/><rect x="6" y="14.6" width="25" height="1.4" fill="#4a76a4"/></svg>
<svg class="a" style="left:16.299999999999955px;top:123.39999999999998px" width="37" height="29" viewBox="0 0 37 29"><defs><linearGradient id="g" x1="0" y1="0" x2="0" y2="1"><stop offset="0" stop-color="#e3e5e7"/><stop offset="1" stop-color="#fbfbfb"/></linearGradient><linearGradient id="tb" x1="0" y1="0" x2="0" y2="1"><stop offset="0" stop-color="#d5e5f5"/><stop offset="1" stop-color="#f6f9fc"/></linearGradient></defs><rect x="0.5" y="0.5" width="36" height="28" fill="url(#g)" stroke="#b4b4b4" stroke-width="1"/><path d="M36.5 0.5v28h-36" fill="none" stroke="#858585" stroke-width="1"/><rect x="2" y="2" width="33" height="25" fill="none" stroke="#dcdcdc" stroke-width="0.6"/><rect x="3" y="3" width="31" height="5" fill="url(#tb)"/><rect x="6" y="4.8" width="25" height="1.4" fill="#4a76a4"/><rect x="4.0" y="9.5" width="29" height="16" fill="#fbfbfb" stroke="#d6d6d6" stroke-width="0.8"/></svg>
<svg class="a" style="left:81px;top:123.39999999999998px" width="37" height="29" viewBox="0 0 37 29"><defs><linearGradient id="g" x1="0" y1="0" x2="0" y2="1"><stop offset="0" stop-color="#e3e5e7"/><stop offset="1" stop-color="#fbfbfb"/></linearGradient><linearGradient id="tb" x1="0" y1="0" x2="0" y2="1"><stop offset="0" stop-color="#d5e5f5"/><stop offset="1" stop-color="#f6f9fc"/></linearGradient></defs><rect x="0.5" y="0.5" width="36" height="28" fill="url(#g)" stroke="#b4b4b4" stroke-width="1"/><path d="M36.5 0.5v28h-36" fill="none" stroke="#858585" stroke-width="1"/><rect x="2" y="2" width="33" height="25" fill="none" stroke="#dcdcdc" stroke-width="0.6"/><rect x="3" y="3" width="31" height="5" fill="url(#tb)"/><rect x="6" y="4.8" width="25" height="1.4" fill="#4a76a4"/><rect x="3.5" y="9" width="30" height="17" fill="#fafafa"/><rect x="7.0" y="19.0" width="2.8" height="5.5" rx="0.9" fill="#5b82b8" stroke="#6a6a6a" stroke-width="0.4"/><rect x="10.9" y="14.5" width="2.8" height="10" rx="0.9" fill="#e57a36" stroke="#6a6a6a" stroke-width="0.4"/><rect x="14.8" y="18.5" width="2.8" height="6" rx="0.9" fill="#f0c040" stroke="#6a6a6a" stroke-width="0.4"/><rect x="18.7" y="21.0" width="2.8" height="3.5" rx="0.9" fill="#5b82b8" stroke="#6a6a6a" stroke-width="0.4"/><rect x="22.6" y="18.0" width="2.8" height="6.5" rx="0.9" fill="#e57a36" stroke="#6a6a6a" stroke-width="0.4"/><rect x="26.5" y="14.0" width="2.8" height="10.5" rx="0.9" fill="#f0c040" stroke="#6a6a6a" stroke-width="0.4"/></svg>
<svg class="a" style="left:16.299999999999955px;top:162.3px" width="37" height="29" viewBox="0 0 37 29"><defs><linearGradient id="g" x1="0" y1="0" x2="0" y2="1"><stop offset="0" stop-color="#e3e5e7"/><stop offset="1" stop-color="#fbfbfb"/></linearGradient><linearGradient id="tb" x1="0" y1="0" x2="0" y2="1"><stop offset="0" stop-color="#d5e5f5"/><stop offset="1" stop-color="#f6f9fc"/></linearGradient></defs><rect x="0.5" y="0.5" width="36" height="28" fill="url(#g)" stroke="#b4b4b4" stroke-width="1"/><path d="M36.5 0.5v28h-36" fill="none" stroke="#858585" stroke-width="1"/><rect x="2" y="2" width="33" height="25" fill="none" stroke="#dcdcdc" stroke-width="0.6"/><rect x="3" y="3" width="31" height="5" fill="url(#tb)"/><rect x="6" y="4.8" width="25" height="1.4" fill="#4a76a4"/><rect x="4.5" y="10" width="28" height="15" fill="#e8eef6" stroke="#9fb2c8" stroke-width="0.4"/><path d="M4.5 13.0h28" stroke="#9fb2c8" stroke-width="0.4"/><path d="M4.5 16.0h28" stroke="#9fb2c8" stroke-width="0.4"/><path d="M4.5 19.0h28" stroke="#9fb2c8" stroke-width="0.4"/><path d="M4.5 22.0h28" stroke="#9fb2c8" stroke-width="0.4"/><path d="M10.1 10v15" stroke="#9fb2c8" stroke-width="0.4"/><path d="M15.7 10v15" stroke="#9fb2c8" stroke-width="0.4"/><path d="M21.3 10v15" stroke="#9fb2c8" stroke-width="0.4"/><path d="M26.9 10v15" stroke="#9fb2c8" stroke-width="0.4"/></svg>
<svg class="a" style="left:81px;top:162.3px" width="37" height="29" viewBox="0 0 37 29"><defs><linearGradient id="g" x1="0" y1="0" x2="0" y2="1"><stop offset="0" stop-color="#e3e5e7"/><stop offset="1" stop-color="#fbfbfb"/></linearGradient><linearGradient id="tb" x1="0" y1="0" x2="0" y2="1"><stop offset="0" stop-color="#d5e5f5"/><stop offset="1" stop-color="#f6f9fc"/></linearGradient></defs><rect x="0.5" y="0.5" width="36" height="28" fill="url(#g)" stroke="#b4b4b4" stroke-width="1"/><path d="M36.5 0.5v28h-36" fill="none" stroke="#858585" stroke-width="1"/><rect x="2" y="2" width="33" height="25" fill="none" stroke="#dcdcdc" stroke-width="0.6"/><rect x="3" y="3" width="31" height="5" fill="url(#tb)"/><rect x="6" y="4.8" width="25" height="1.4" fill="#4a76a4"/><rect x="3.5" y="10.5" width="14" height="14" fill="#3f7fd0"/><rect x="3.5" y="18.2" width="14" height="6.3" fill="#5aa040"/><circle cx="12.6" cy="18.2" r="3.1" fill="#2f7a2a"/><rect x="20.0" y="10.5" width="13" height="14" fill="#fbfbfb" stroke="#d6d6d6" stroke-width="0.8"/><rect x="21.0" y="12.0" width="0.9" height="0.9" fill="#3a5f8a"/><rect x="22.8" y="12.0" width="7.5" height="0.9" fill="#7e9cbf"/><rect x="22.5" y="14.2" width="0.9" height="0.9" fill="#3a5f8a"/><rect x="24.3" y="14.2" width="6.0" height="0.9" fill="#7e9cbf"/><rect x="22.5" y="16.4" width="0.9" height="0.9" fill="#3a5f8a"/><rect x="24.3" y="16.4" width="6.0" height="0.9" fill="#7e9cbf"/><rect x="24.0" y="18.6" width="0.9" height="0.9" fill="#3a5f8a"/><rect x="25.8" y="18.6" width="4.5" height="0.9" fill="#7e9cbf"/></svg>
<svg class="a" style="left:16.299999999999955px;top:201.2px" width="37" height="29" viewBox="0 0 37 29"><defs><linearGradient id="g" x1="0" y1="0" x2="0" y2="1"><stop offset="0" stop-color="#e3e5e7"/><stop offset="1" stop-color="#fbfbfb"/></linearGradient><linearGradient id="tb" x1="0" y1="0" x2="0" y2="1"><stop offset="0" stop-color="#d5e5f5"/><stop offset="1" stop-color="#f6f9fc"/></linearGradient></defs><rect x="0.5" y="0.5" width="36" height="28" fill="url(#g)" stroke="#b4b4b4" stroke-width="1"/><path d="M36.5 0.5v28h-36" fill="none" stroke="#858585" stroke-width="1"/><rect x="2" y="2" width="33" height="25" fill="none" stroke="#dcdcdc" stroke-width="0.6"/><rect x="3" y="3" width="31" height="5" fill="url(#tb)"/><rect x="6" y="4.8" width="25" height="1.4" fill="#4a76a4"/><rect x="4.0" y="9.5" width="14" height="16" fill="#fbfbfb" stroke="#d6d6d6" stroke-width="0.8"/><rect x="5.5" y="11.0" width="0.9" height="0.9" fill="#3a5f8a"/><rect x="7.3" y="11.0" width="7.5" height="0.9" fill="#7e9cbf"/><rect x="7.0" y="13.2" width="0.9" height="0.9" fill="#3a5f8a"/><rect x="8.8" y="13.2" width="6.0" height="0.9" fill="#7e9cbf"/><rect x="7.0" y="15.4" width="0.9" height="0.9" fill="#3a5f8a"/><rect x="8.8" y="15.4" width="6.0" height="0.9" fill="#7e9cbf"/><rect x="8.5" y="17.6" width="0.9" height="0.9" fill="#3a5f8a"/><rect x="10.3" y="17.6" width="4.5" height="0.9" fill="#7e9cbf"/><rect x="19.5" y="9.5" width="13.5" height="16" fill="#fbfbfb" stroke="#d6d6d6" stroke-width="0.8"/><rect x="21.5" y="17" width="2.2" height="6" rx="0.8" fill="#5b82b8" stroke="#666" stroke-width="0.3"/><rect x="24.1" y="14" width="2.2" height="9" rx="0.8" fill="#e57a36" stroke="#666" stroke-width="0.3"/><rect x="26.7" y="18" width="2.2" height="5" rx="0.8" fill="#f0c040" stroke="#666" stroke-width="0.3"/></svg>
<svg class="a" style="left:81px;top:201.2px" width="37" height="29" viewBox="0 0 37 29"><defs><linearGradient id="g" x1="0" y1="0" x2="0" y2="1"><stop offset="0" stop-color="#e3e5e7"/><stop offset="1" stop-color="#fbfbfb"/></linearGradient><linearGradient id="tb" x1="0" y1="0" x2="0" y2="1"><stop offset="0" stop-color="#d5e5f5"/><stop offset="1" stop-color="#f6f9fc"/></linearGradient></defs><rect x="0.5" y="0.5" width="36" height="28" fill="url(#g)" stroke="#b4b4b4" stroke-width="1"/><path d="M36.5 0.5v28h-36" fill="none" stroke="#858585" stroke-width="1"/><rect x="2" y="2" width="33" height="25" fill="none" stroke="#dcdcdc" stroke-width="0.6"/><rect x="3" y="3" width="31" height="5" fill="url(#tb)"/><rect x="6" y="4.8" width="25" height="1.4" fill="#4a76a4"/><rect x="4.0" y="9.5" width="14" height="16" fill="#fbfbfb" stroke="#d6d6d6" stroke-width="0.8"/><rect x="5.5" y="11.0" width="0.9" height="0.9" fill="#3a5f8a"/><rect x="7.3" y="11.0" width="7.5" height="0.9" fill="#7e9cbf"/><rect x="7.0" y="13.2" width="0.9" height="0.9" fill="#3a5f8a"/><rect x="8.8" y="13.2" width="6.0" height="0.9" fill="#7e9cbf"/><rect x="7.0" y="15.4" width="0.9" height="0.9" fill="#3a5f8a"/><rect x="8.8" y="15.4" width="6.0" height="0.9" fill="#7e9cbf"/><rect x="8.5" y="17.6" width="0.9" height="0.9" fill="#3a5f8a"/><rect x="10.3" y="17.6" width="4.5" height="0.9" fill="#7e9cbf"/><rect x="19.5" y="10.5" width="13" height="14" fill="#3f7fd0"/><rect x="19.5" y="18.2" width="13" height="6.3" fill="#5aa040"/><circle cx="28.0" cy="18.2" r="3.1" fill="#2f7a2a"/></svg>
<svg class="a" style="left:16.299999999999955px;top:240.09999999999997px" width="37" height="29" viewBox="0 0 37 29"><defs><linearGradient id="g" x1="0" y1="0" x2="0" y2="1"><stop offset="0" stop-color="#e3e5e7"/><stop offset="1" stop-color="#fbfbfb"/></linearGradient><linearGradient id="tb" x1="0" y1="0" x2="0" y2="1"><stop offset="0" stop-color="#d5e5f5"/><stop offset="1" stop-color="#f6f9fc"/></linearGradient></defs><rect x="0.5" y="0.5" width="36" height="28" fill="url(#g)" stroke="#b4b4b4" stroke-width="1"/><path d="M36.5 0.5v28h-36" fill="none" stroke="#858585" stroke-width="1"/><rect x="2" y="2" width="33" height="25" fill="none" stroke="#dcdcdc" stroke-width="0.6"/><rect x="3" y="3" width="31" height="5" fill="url(#tb)"/><rect x="6" y="4.8" width="25" height="1.4" fill="#4a76a4"/><rect x="4.0" y="9.5" width="14" height="16" fill="#fbfbfb" stroke="#d6d6d6" stroke-width="0.8"/><rect x="6.0" y="17" width="2.2" height="6" rx="0.8" fill="#5b82b8" stroke="#666" stroke-width="0.3"/><rect x="8.6" y="14" width="2.2" height="9" rx="0.8" fill="#e57a36" stroke="#666" stroke-width="0.3"/><rect x="11.2" y="18" width="2.2" height="5" rx="0.8" fill="#f0c040" stroke="#666" stroke-width="0.3"/><rect x="19.5" y="9.5" width="13.5" height="16" fill="#fbfbfb" stroke="#d6d6d6" stroke-width="0.8"/><rect x="21.0" y="11.0" width="0.9" height="0.9" fill="#3a5f8a"/><rect x="22.8" y="11.0" width="7.5" height="0.9" fill="#7e9cbf"/><rect x="22.5" y="13.2" width="0.9" height="0.9" fill="#3a5f8a"/><rect x="24.3" y="13.2" width="6.0" height="0.9" fill="#7e9cbf"/><rect x="22.5" y="15.4" width="0.9" height="0.9" fill="#3a5f8a"/><rect x="24.3" y="15.4" width="6.0" height="0.9" fill="#7e9cbf"/><rect x="24.0" y="17.6" width="0.9" height="0.9" fill="#3a5f8a"/><rect x="25.8" y="17.6" width="4.5" height="0.9" fill="#7e9cbf"/></svg>
<svg class="a" style="left:81px;top:240.09999999999997px" width="37" height="29" viewBox="0 0 37 29"><defs><linearGradient id="g" x1="0" y1="0" x2="0" y2="1"><stop offset="0" stop-color="#e3e5e7"/><stop offset="1" stop-color="#fbfbfb"/></linearGradient><linearGradient id="tb" x1="0" y1="0" x2="0" y2="1"><stop offset="0" stop-color="#d5e5f5"/><stop offset="1" stop-color="#f6f9fc"/></linearGradient></defs><rect x="0.5" y="0.5" width="36" height="28" fill="url(#g)" stroke="#b4b4b4" stroke-width="1"/><path d="M36.5 0.5v28h-36" fill="none" stroke="#858585" stroke-width="1"/><rect x="2" y="2" width="33" height="25" fill="none" stroke="#dcdcdc" stroke-width="0.6"/><rect x="3" y="3" width="31" height="5" fill="url(#tb)"/><rect x="6" y="4.8" width="25" height="1.4" fill="#4a76a4"/><rect x="4.0" y="9.5" width="14" height="16" fill="#fbfbfb" stroke="#d6d6d6" stroke-width="0.8"/><rect x="5.5" y="11.0" width="0.9" height="0.9" fill="#3a5f8a"/><rect x="7.3" y="11.0" width="7.5" height="0.9" fill="#7e9cbf"/><rect x="7.0" y="13.2" width="0.9" height="0.9" fill="#3a5f8a"/><rect x="8.8" y="13.2" width="6.0" height="0.9" fill="#7e9cbf"/><rect x="7.0" y="15.4" width="0.9" height="0.9" fill="#3a5f8a"/><rect x="8.8" y="15.4" width="6.0" height="0.9" fill="#7e9cbf"/><rect x="8.5" y="17.6" width="0.9" height="0.9" fill="#3a5f8a"/><rect x="10.3" y="17.6" width="4.5" height="0.9" fill="#7e9cbf"/><rect x="19.5" y="9.5" width="13.5" height="16" fill="#fbfbfb" stroke="#d6d6d6" stroke-width="0.8"/></svg>
<svg class="a" style="left:16.299999999999955px;top:279.0px" width="37" height="29" viewBox="0 0 37 29"><defs><linearGradient id="g" x1="0" y1="0" x2="0" y2="1"><stop offset="0" stop-color="#e3e5e7"/><stop offset="1" stop-color="#fbfbfb"/></linearGradient><linearGradient id="tb" x1="0" y1="0" x2="0" y2="1"><stop offset="0" stop-color="#d5e5f5"/><stop offset="1" stop-color="#f6f9fc"/></linearGradient></defs><rect x="0.5" y="0.5" width="36" height="28" fill="url(#g)" stroke="#b4b4b4" stroke-width="1"/><path d="M36.5 0.5v28h-36" fill="none" stroke="#858585" stroke-width="1"/><rect x="2" y="2" width="33" height="25" fill="none" stroke="#dcdcdc" stroke-width="0.6"/><rect x="3" y="3" width="31" height="5" fill="url(#tb)"/><rect x="6" y="4.8" width="25" height="1.4" fill="#4a76a4"/><rect x="4.0" y="9.5" width="14" height="16" fill="#fbfbfb" stroke="#d6d6d6" stroke-width="0.8"/><rect x="5.5" y="11.0" width="0.9" height="0.9" fill="#3a5f8a"/><rect x="7.3" y="11.0" width="7.5" height="0.9" fill="#7e9cbf"/><rect x="7.0" y="13.2" width="0.9" height="0.9" fill="#3a5f8a"/><rect x="8.8" y="13.2" width="6.0" height="0.9" fill="#7e9cbf"/><rect x="7.0" y="15.4" width="0.9" height="0.9" fill="#3a5f8a"/><rect x="8.8" y="15.4" width="6.0" height="0.9" fill="#7e9cbf"/><rect x="8.5" y="17.6" width="0.9" height="0.9" fill="#3a5f8a"/><rect x="10.3" y="17.6" width="4.5" height="0.9" fill="#7e9cbf"/><rect x="19.5" y="9.5" width="13.5" height="7.5" fill="#fbfbfb" stroke="#d6d6d6" stroke-width="0.8"/><rect x="19.5" y="18.0" width="13.5" height="7.5" fill="#fbfbfb" stroke="#d6d6d6" stroke-width="0.8"/></svg>
<svg class="a" style="left:81px;top:279.0px" width="37" height="29" viewBox="0 0 37 29"><defs><linearGradient id="g" x1="0" y1="0" x2="0" y2="1"><stop offset="0" stop-color="#e3e5e7"/><stop offset="1" stop-color="#fbfbfb"/></linearGradient><linearGradient id="tb" x1="0" y1="0" x2="0" y2="1"><stop offset="0" stop-color="#d5e5f5"/><stop offset="1" stop-color="#f6f9fc"/></linearGradient></defs><rect x="0.5" y="0.5" width="36" height="28" fill="url(#g)" stroke="#b4b4b4" stroke-width="1"/><path d="M36.5 0.5v28h-36" fill="none" stroke="#858585" stroke-width="1"/><rect x="2" y="2" width="33" height="25" fill="none" stroke="#dcdcdc" stroke-width="0.6"/><rect x="3" y="3" width="31" height="5" fill="url(#tb)"/><rect x="6" y="4.8" width="25" height="1.4" fill="#4a76a4"/><rect x="4.0" y="9.5" width="14" height="16" fill="#fbfbfb" stroke="#d6d6d6" stroke-width="0.8"/><rect x="19.5" y="9.5" width="13.5" height="16" fill="#fbfbfb" stroke="#d6d6d6" stroke-width="0.8"/><rect x="21.0" y="11.0" width="0.9" height="0.9" fill="#3a5f8a"/><rect x="22.8" y="11.0" width="7.5" height="0.9" fill="#7e9cbf"/><rect x="22.5" y="13.2" width="0.9" height="0.9" fill="#3a5f8a"/><rect x="24.3" y="13.2" width="6.0" height="0.9" fill="#7e9cbf"/><rect x="22.5" y="15.4" width="0.9" height="0.9" fill="#3a5f8a"/><rect x="24.3" y="15.4" width="6.0" height="0.9" fill="#7e9cbf"/><rect x="24.0" y="17.6" width="0.9" height="0.9" fill="#3a5f8a"/><rect x="25.8" y="17.6" width="4.5" height="0.9" fill="#7e9cbf"/></svg>
<svg class="a" style="left:16.299999999999955px;top:317.9px" width="37" height="29" viewBox="0 0 37 29"><defs><linearGradient id="g" x1="0" y1="0" x2="0" y2="1"><stop offset="0" stop-color="#e3e5e7"/><stop offset="1" stop-color="#fbfbfb"/></linearGradient><linearGradient id="tb" x1="0" y1="0" x2="0" y2="1"><stop offset="0" stop-color="#d5e5f5"/><stop offset="1" stop-color="#f6f9fc"/></linearGradient></defs><rect x="0.5" y="0.5" width="36" height="28" fill="url(#g)" stroke="#b4b4b4" stroke-width="1"/><path d="M36.5 0.5v28h-36" fill="none" stroke="#858585" stroke-width="1"/><rect x="2" y="2" width="33" height="25" fill="none" stroke="#dcdcdc" stroke-width="0.6"/><rect x="3" y="3" width="31" height="5" fill="url(#tb)"/><rect x="6" y="4.8" width="25" height="1.4" fill="#4a76a4"/><rect x="4.0" y="9.5" width="29" height="7" fill="#fbfbfb" stroke="#d6d6d6" stroke-width="0.8"/><rect x="4.0" y="18.0" width="29" height="7.5" fill="#fbfbfb" stroke="#d6d6d6" stroke-width="0.8"/><rect x="6.0" y="19.0" width="0.9" height="0.9" fill="#3a5f8a"/><rect x="7.8" y="19.0" width="21.5" height="0.9" fill="#7e9cbf"/><rect x="7.5" y="21.2" width="0.9" height="0.9" fill="#3a5f8a"/><rect x="9.3" y="21.2" width="20.0" height="0.9" fill="#7e9cbf"/></svg>
<svg class="a" style="left:81px;top:317.9px" width="37" height="29" viewBox="0 0 37 29"><defs><linearGradient id="g" x1="0" y1="0" x2="0" y2="1"><stop offset="0" stop-color="#e3e5e7"/><stop offset="1" stop-color="#fbfbfb"/></linearGradient><linearGradient id="tb" x1="0" y1="0" x2="0" y2="1"><stop offset="0" stop-color="#d5e5f5"/><stop offset="1" stop-color="#f6f9fc"/></linearGradient></defs><rect x="0.5" y="0.5" width="36" height="28" fill="url(#g)" stroke="#b4b4b4" stroke-width="1"/><path d="M36.5 0.5v28h-36" fill="none" stroke="#858585" stroke-width="1"/><rect x="2" y="2" width="33" height="25" fill="none" stroke="#dcdcdc" stroke-width="0.6"/><rect x="3" y="3" width="31" height="5" fill="url(#tb)"/><rect x="6" y="4.8" width="25" height="1.4" fill="#4a76a4"/><rect x="4.0" y="9.5" width="14" height="7.5" fill="#fbfbfb" stroke="#d6d6d6" stroke-width="0.8"/><rect x="4.0" y="18.0" width="14" height="7.5" fill="#fbfbfb" stroke="#d6d6d6" stroke-width="0.8"/><rect x="19.5" y="9.5" width="13.5" height="16" fill="#fbfbfb" stroke="#d6d6d6" stroke-width="0.8"/><rect x="21.0" y="11.0" width="0.9" height="0.9" fill="#3a5f8a"/><rect x="22.8" y="11.0" width="7.5" height="0.9" fill="#7e9cbf"/><rect x="22.5" y="13.2" width="0.9" height="0.9" fill="#3a5f8a"/><rect x="24.3" y="13.2" width="6.0" height="0.9" fill="#7e9cbf"/><rect x="22.5" y="15.4" width="0.9" height="0.9" fill="#3a5f8a"/><rect x="24.3" y="15.4" width="6.0" height="0.9" fill="#7e9cbf"/><rect x="24.0" y="17.6" width="0.9" height="0.9" fill="#3a5f8a"/><rect x="25.8" y="17.6" width="4.5" height="0.9" fill="#7e9cbf"/></svg>
</div>
<div class="a" style="left:4.5px;top:481px;width:13px;height:15px;background:#cdcccb;border:1px solid #bdbcbb;border-radius:1px"></div>
<svg class="a" style="left:6.5px;top:484px" width="10" height="10" viewBox="0 0 10 10"><path d="M2 1v7.5l2-2 1.5 3 1.2-0.6-1.5-3h2.8z" fill="#f8f8f8" stroke="#333" stroke-width="0.8"/></svg>
<div class="a" style="left:21px;top:483px;width:1px;height:11px;background:#d8d7d6"></div>
<svg class="a" style="left:25px;top:484px" width="11" height="10" viewBox="0 0 11 10"><path d="M1 9.5l9-9" stroke="#4f7fc0" stroke-width="1.2"/></svg>
<svg class="a" style="left:40px;top:484px" width="10" height="10" viewBox="0 0 10 10"><path d="M0.5 5h6" stroke="#4a86d0" stroke-width="1.8"/><path d="M6 1.8l4 3.2-4 3.2z" fill="#4a86d0"/></svg>
<svg class="a" style="left:55px;top:484px" width="11" height="10" viewBox="0 0 11 10"><rect x="0.5" y="1.5" width="10" height="6.5" fill="#6ea6e6" stroke="#3a70b0" stroke-width="0.9"/></svg>
<svg class="a" style="left:69.8px;top:484px" width="11" height="10" viewBox="0 0 11 10"><ellipse cx="5.25" cy="4.8" rx="4.8" ry="3.3" fill="#6ea6e6" stroke="#3a70b0" stroke-width="0.9"/></svg>
<svg class="a" style="left:86.4px;top:484px" width="9" height="10" viewBox="0 0 9 10"><path d="M0.5 0.8h7.5v2M4.25 0.8v8.5M2.5 9.3h3.5" fill="none" stroke="#2f4f6f" stroke-width="1.5"/></svg>
<div class="a" style="left:100.4px;top:483px;width:1px;height:11px;background:#d8d7d6"></div>
<svg class="a" style="left:104px;top:484px" width="11" height="10" viewBox="0 0 11 10"><path d="M1 8c2-1 3-5 5-4s2 3 4 0" fill="none" stroke="#4a7ac0" stroke-width="1.3"/><path d="M5 6l4-5" stroke="#e0b020" stroke-width="1.6"/><path d="M0.5 9.5h6" stroke="#d0a020" stroke-width="1"/></svg>
<svg class="a" style="left:118px;top:488px" width="4" height="3" viewBox="0 0 4 3"><path d="M0 0h4l-2 2.5z" fill="#111"/></svg>
<svg class="a" style="left:125.5px;top:484px" width="10" height="10" viewBox="0 0 10 10"><path d="M1 2h3l2 5h3" fill="none" stroke="#4a86d0" stroke-width="1.6"/><rect x="0" y="1" width="2" height="2" fill="#2a5a9a"/><rect x="8" y="6" width="2" height="2" fill="#2a5a9a"/></svg>
<svg class="a" style="left:139.4px;top:488px" width="4" height="3" viewBox="0 0 4 3"><path d="M0 0h4l-2 2.5z" fill="#111"/></svg>
<svg class="a" style="left:147px;top:484px" width="10" height="10" viewBox="0 0 10 10"><path d="M5 0.5l4.5 4.5-4.5 4.5-4.5-4.5z" fill="#6aa6e6" stroke="#3a76c0" stroke-width="0.8"/></svg>
<svg class="a" style="left:160.7px;top:488px" width="4" height="3" viewBox="0 0 4 3"><path d="M0 0h4l-2 2.5z" fill="#111"/></svg>
<svg class="a" style="left:168.5px;top:484px" width="10" height="10" viewBox="0 0 10 10"><circle cx="4.8" cy="4.8" r="4.3" fill="#86b8ee" stroke="#3a76c0" stroke-width="0.8"/><path d="M3 4h3.6M3 6h3.6" stroke="#2a5a9a" stroke-width="0.8"/></svg>
<svg class="a" style="left:182.5px;top:488px" width="4" height="3" viewBox="0 0 4 3"><path d="M0 0h4l-2 2.5z" fill="#111"/></svg>
<svg class="a" style="left:190.5px;top:484px" width="10" height="10" viewBox="0 0 10 10"><path d="M0.5 5l2.5-2.5v1.5h4v-1.5l2.5 2.5-2.5 2.5v-1.5h-4v1.5z" fill="#7fb2ea" stroke="#3a76c0" stroke-width="0.7"/></svg>
<svg class="a" style="left:204px;top:488px" width="4" height="3" viewBox="0 0 4 3"><path d="M0 0h4l-2 2.5z" fill="#111"/></svg>
<svg class="a" style="left:212px;top:484px" width="10" height="10" viewBox="0 0 10 10"><rect x="0.5" y="0.5" width="8.5" height="9" fill="#7fb2ea" stroke="#3a76c0" stroke-width="0.8"/><path d="M2.5 0.5v9" stroke="#3a76c0" stroke-width="0.6"/></svg>
<svg class="a" style="left:225.3px;top:488px" width="4" height="3" viewBox="0 0 4 3"><path d="M0 0h4l-2 2.5z" fill="#111"/></svg>
<svg class="a" style="left:233px;top:484px" width="11" height="10" viewBox="0 0 11 10"><path d="M1 0.5h8.5a1 1 0 0 1 1 1v4.5a1 1 0 0 1-1 1h-5l-2.5 2.5v-2.5h-1a1 1 0 0 1-1-1v-4.5a1 1 0 0 1 1-1z" fill="#7fb2ea" stroke="#3a76c0" stroke-width="0.7"/></svg>
<svg class="a" style="left:247px;top:488px" width="4" height="3" viewBox="0 0 4 3"><path d="M0 0h4l-2 2.5z" fill="#111"/></svg>
<svg class="a" style="left:255px;top:484px" width="10" height="10" viewBox="0 0 10 10"><path d="M4.5 0.3l1.3 3h3.2l-2.6 2 1 3.2-2.9-1.9-2.9 1.9 1-3.2-2.6-2h3.2z" fill="#4a8ad8" stroke="#2a60a8" stroke-width="0.5"/></svg>
<svg class="a" style="left:268px;top:488px" width="4" height="3" viewBox="0 0 4 3"><path d="M0 0h4l-2 2.5z" fill="#111"/></svg>
<div class="a" style="left:276px;top:483px;width:1px;height:11px;background:#d8d7d6"></div>
<svg class="a" style="left:281px;top:484px" width="11" height="10" viewBox="0 0 11 10"><path d="M1.5 8.5l2-6 5 1.5-1 5z" fill="none" stroke="#3a6aa0" stroke-width="0.7" stroke-dasharray="1 0.7"/><rect x="0.5" y="7.5" width="2" height="2" fill="#2a5a9a"/><rect x="7" y="8" width="2" height="2" fill="#2a5a9a"/><rect x="2.5" y="1.5" width="2" height="2" fill="#2a5a9a"/></svg>
<svg class="a" style="left:297px;top:484px" width="10" height="10" viewBox="0 0 10 10"><path d="M1 9l4-4" stroke="#d0a030" stroke-width="1.5"/><path d="M5 5l3.5-4" stroke="#f0c040" stroke-width="2"/><path d="M0.5 9.5l1-1" stroke="#3a5f90" stroke-width="1"/></svg>
<div class="a" style="left:310.5px;top:483px;width:1px;height:11px;background:#d8d7d6"></div>
<svg class="a" style="left:316px;top:484px" width="10" height="10" viewBox="0 0 10 10"><rect x="0.5" y="1.5" width="9" height="8" fill="#d9a030" stroke="#8a6010" stroke-width="0.7"/><text x="5" y="8" font-size="6" text-anchor="middle" font-family="Liberation Sans" font-weight="bold" fill="#fff">A</text></svg>
<svg class="a" style="left:331px;top:484px" width="10" height="10" viewBox="0 0 10 10"><rect x="0.5" y="2.5" width="6" height="6" fill="#e05030" stroke="#903020" stroke-width="0.6"/><rect x="3.5" y="0.5" width="6" height="6" fill="#f0b030" stroke="#a07010" stroke-width="0.6"/><circle cx="6" cy="7" r="2.6" fill="#4a86d0"/></svg>
<svg class="a" style="left:346.5px;top:484px" width="10" height="10" viewBox="0 0 10 10"><rect x="0.5" y="2" width="9" height="7.5" fill="#c9a050" stroke="#806020" stroke-width="0.7"/><rect x="2" y="4" width="6" height="3.5" fill="#5a8a40"/></svg>
<div class="a" style="left:360px;top:483px;width:1px;height:11px;background:#d8d7d6"></div>
<svg class="a" style="left:365px;top:484px" width="10" height="10" viewBox="0 0 10 10"><circle cx="5" cy="5" r="4.3" fill="#8aaad0" stroke="#4a6a9a" stroke-width="0.8"/><path d="M1.5 6c2-3 5-3 7-1" fill="none" stroke="#fff" stroke-width="1.2"/></svg>
<svg class="a" style="left:380px;top:484px" width="11" height="10" viewBox="0 0 11 10"><rect x="0.5" y="0.5" width="9.5" height="9" fill="#f4f4f4" stroke="#7a8aa0" stroke-width="0.7"/><rect x="1.5" y="3" width="3" height="4" fill="#5aa060"/><circle cx="6.5" cy="5" r="2" fill="#d04040"/></svg>
<svg class="a" style="left:393.2px;top:488px" width="4" height="3" viewBox="0 0 4 3"><path d="M0 0h4l-2 2.5z" fill="#111"/></svg>
<svg class="a" style="left:401px;top:484px" width="11" height="10" viewBox="0 0 11 10"><rect x="0.5" y="2.5" width="7" height="7" fill="#e8b020" stroke="#907010" stroke-width="0.7"/><rect x="3" y="0.5" width="7" height="6.5" fill="#f8d050" stroke="#a08010" stroke-width="0.7"/></svg>
<svg class="a" style="left:415.4px;top:488px" width="4" height="3" viewBox="0 0 4 3"><path d="M0 0h4l-2 2.5z" fill="#111"/></svg>
<div class="a" style="left:422.5px;top:483px;width:1px;height:11px;background:#d8d7d6"></div>
<svg class="a" style="left:429px;top:484px" width="10" height="10" viewBox="0 0 10 10"><path d="M2 9v-4a3 3 0 0 1 6 0v4" fill="none" stroke="#cfcfcf" stroke-width="1.6"/></svg>
<svg class="a" style="left:447.5px;top:484px" width="7" height="10" viewBox="0 0 7 10"><path d="M1.5 2h4v7h-4z" fill="none" stroke="#cfcfcf" stroke-width="1.2"/></svg>
<div class="a" style="left:459.5px;top:485.5px;width:5.5px;height:11px;background:linear-gradient(#d8d7d6,#b9b8b7);border-radius:1px"></div>
<svg class="a" style="left:460.0px;top:492.5px" width="4" height="3" viewBox="0 0 4 3"><path d="M0 0h4l-2 2.5z" fill="#111"/></svg>
<div class="a" style="left:0px;top:498px;width:859px;height:14px;background:#e2e1e0"></div>
<div class="a" style="left:3px;top:499px;width:856px;height:13px;background:#e4e3e2;border-top:1px solid #cbcac9;border-left:1px solid #c8c7c6"></div>
<div class="a" style="left:288.5px;top:499px;width:1px;height:13px;background:#c8c7c6"></div>
<div class="a" style="left:289.5px;top:499px;width:1px;height:13px;background:#f2f2f1"></div>
<div class="a" style="left:419px;top:499px;width:1px;height:13px;background:#c8c7c6"></div>
<div class="a" style="left:420px;top:499px;width:1px;height:13px;background:#f2f2f1"></div>
<div class="a" style="left:436.5px;top:499px;width:1px;height:13px;background:#c8c7c6"></div>
<div class="a" style="left:437.5px;top:499px;width:1px;height:13px;background:#f2f2f1"></div>
<div class="a" style="left:454px;top:499px;width:1px;height:13px;background:#c8c7c6"></div>
<div class="a" style="left:455px;top:499px;width:1px;height:13px;background:#f2f2f1"></div>
<div class="a" style="left:534px;top:499px;width:1px;height:13px;background:#c8c7c6"></div>
<div class="a" style="left:535px;top:499px;width:1px;height:13px;background:#f2f2f1"></div>
<div class="a" style="left:744px;top:499px;width:1px;height:13px;background:#c8c7c6"></div>
<div class="a" style="left:745px;top:499px;width:1px;height:13px;background:#f2f2f1"></div>
<div class="a" style="left:828px;top:499px;width:1px;height:13px;background:#c8c7c6"></div>
<div class="a" style="left:829px;top:499px;width:1px;height:13px;background:#f2f2f1"></div>
<div class="a" style="left:855.5px;top:499px;width:1px;height:13px;background:#c8c7c6"></div>
<svg class="a" style="left:292.5px;top:500.5px" width="10" height="10" viewBox="0 0 10 10"><path d="M1.5 1v7h6" fill="none" stroke="#6a7a9a" stroke-width="1"/><rect x="3" y="3" width="5" height="4" fill="#dfe8f4" stroke="#6a84b0" stroke-width="0.7"/></svg>
<div class="t" style="left:305.5px;top:500.95px;font-size:6.5px;font-weight:normal;color:#111;">19.62 / 5.25</div>
<svg class="a" style="left:355.5px;top:500.5px" width="11" height="10" viewBox="0 0 11 10"><path d="M1 1v8M0 1.5h2M0 8.5h2" stroke="#333" stroke-width="0.7"/><rect x="3.5" y="2.5" width="6" height="6" fill="none" stroke="#555" stroke-width="0.7" stroke-dasharray="1 0.8"/></svg>
<div class="t" style="left:368.5px;top:500.95px;font-size:6.5px;font-weight:normal;color:#111;">0.00 x 0.00</div>
<div class="t" style="left:426.5px;top:499.92px;font-size:6px;font-weight:normal;color:#1a1a1a;">*</div>
<div class="t" style="left:457px;top:500.95px;font-size:6.5px;font-weight:normal;color:#111;">Pagina 1 / 1</div>
<div class="t" style="left:538.7px;top:500.95px;font-size:6.5px;font-weight:normal;color:#111;">Standard</div>
<svg class="a" style="left:746px;top:501px" width="8" height="8" viewBox="0 0 8 8"><circle cx="3.8" cy="3.8" r="3.2" fill="#f0f0f0" stroke="#5a7080" stroke-width="0.9"/><path d="M2 3.8h3.6" stroke="#333" stroke-width="0.9"/></svg>
<div class="a" style="left:756.8px;top:504.5px;width:57px;height:1px;background:#8a8a8a"></div>
<div class="a" style="left:784.2px;top:502px;width:0.8px;height:6px;background:#666"></div>
<svg class="a" style="left:775.5px;top:501px" width="7" height="8" viewBox="0 0 7 8"><path d="M3.5 0.5l3 3.5-3 3.5-3-3.5z" fill="#5f8a9a" stroke="#355a6a" stroke-width="0.7"/></svg>
<svg class="a" style="left:817px;top:501px" width="8" height="8" viewBox="0 0 8 8"><circle cx="3.8" cy="3.8" r="3.2" fill="#f0f0f0" stroke="#5a7080" stroke-width="0.9"/><path d="M2 3.8h3.6M3.8 2v3.6" stroke="#333" stroke-width="0.9"/></svg>
<div class="t" style="left:836px;top:500.95px;font-size:6.5px;font-weight:normal;color:#111;">80%</div>
</body></html>
